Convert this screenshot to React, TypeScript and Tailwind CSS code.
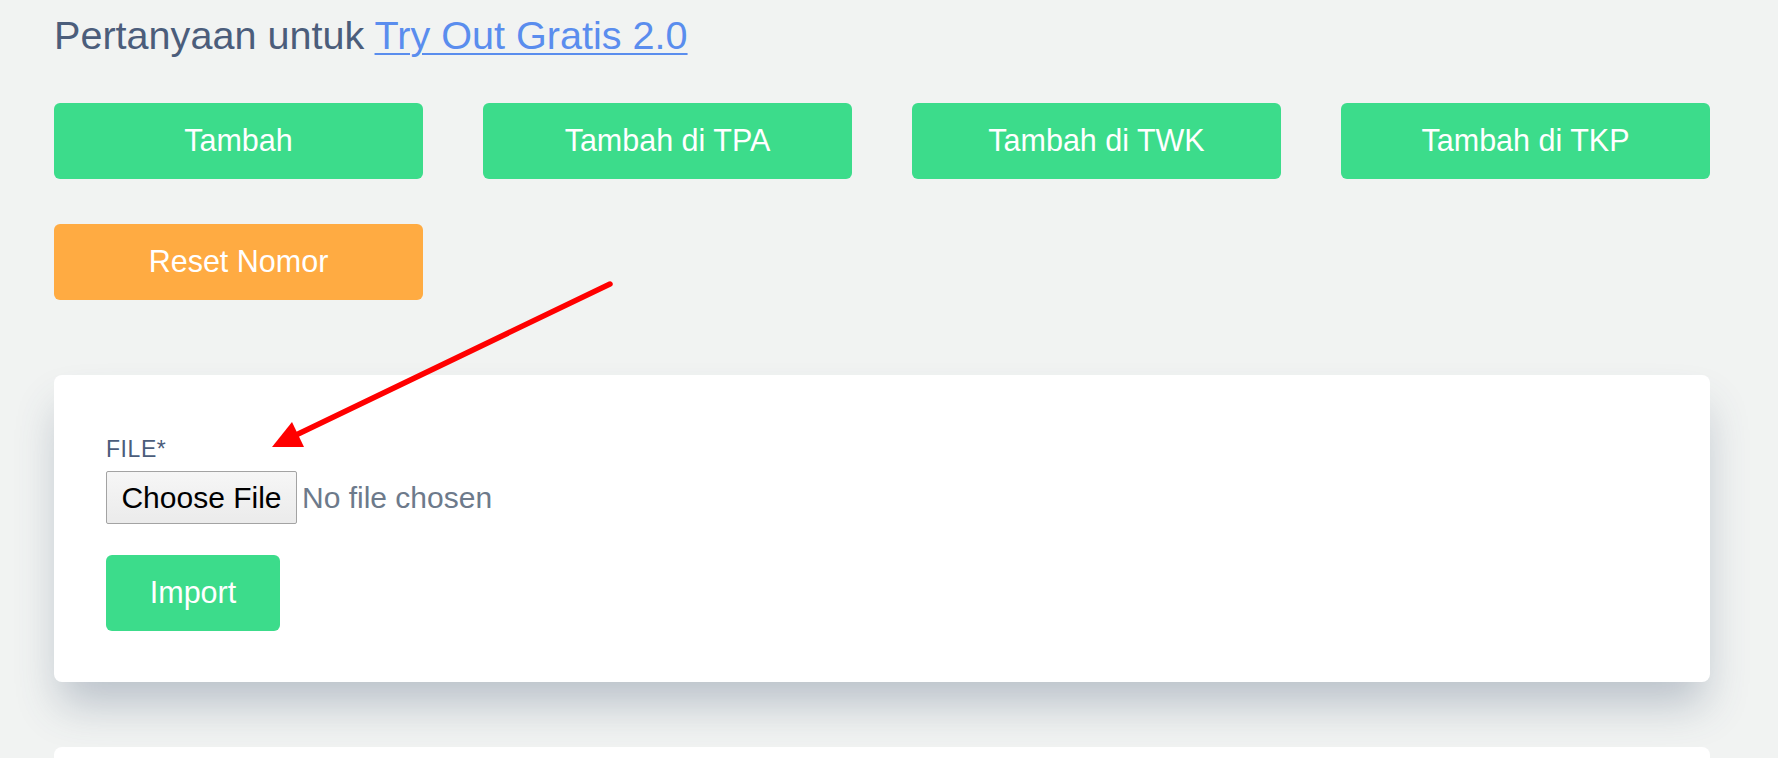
const actions = [
  { label: "Tambah", color: "bg-[#3cdc8b]" },
  { label: "Tambah di TPA", color: "bg-[#3cdc8b]" },
  { label: "Tambah di TWK", color: "bg-[#3cdc8b]" },
  { label: "Tambah di TKP", color: "bg-[#3cdc8b]" },
  { label: "Reset Nomor", color: "bg-[#ffab42]" },
];

function Arrow() {
  return (
    <svg
      className="absolute left-0 top-0 pointer-events-none"
      width="700"
      height="480"
      viewBox="0 0 700 480"
    >
      <line x1="610" y1="284" x2="296" y2="435" stroke="#ff0000" strokeWidth="5.5" strokeLinecap="round" />
      <polygon points="272,447 292,422 304,447" fill="#ff0000" />
    </svg>
  );
}

export default function App() {
  return (
    <div
      className="relative min-h-screen overflow-hidden bg-[#f1f3f2] pl-[54px]"
      style={{ fontFamily: '"Liberation Sans", Arial, sans-serif' }}
    >
      <div className="w-[1656px]">
        <h1 className="mt-[13px] text-[39.6px] leading-[44px] text-[#4b5d7b]">
          Pertanyaan untuk{" "}
          <a href="#" className="text-[#5a8dee] underline underline-offset-[4px] decoration-[2px]">
            Try Out Gratis 2.0
          </a>
        </h1>

        <div className="mt-[46px] grid grid-cols-4 gap-x-[60px] gap-y-[45px]">
          {actions.map(({ label, color }) => (
            <button
              key={label}
              className={`${color} h-[76px] rounded-[6px] text-[30.5px] text-white flex items-center justify-center`}
            >
              {label}
            </button>
          ))}
        </div>

        {/* import card */}
        <div className="mt-[75px] rounded-[8px] bg-white px-[52px] pt-[60px] pb-[51px] shadow-[0_28px_44px_-6px_rgba(60,80,110,0.3)]">
          <label className="block text-[23px] leading-[28px] tracking-wide uppercase text-[#4b5d7b]">
            File*
          </label>
          <div className="mt-[8px] flex items-center">
            <span className="h-[53px] w-[191px] flex items-center justify-center rounded-[2px] border border-[#a3a3a3] bg-gradient-to-b from-[#f6f6f6] to-[#ebebeb] text-[30px] text-black">
              Choose File
            </span>
            <span className="ml-[5px] text-[30px] text-[#6d7a8b]">No file chosen</span>
          </div>
          <button className="mt-[31px] h-[76px] w-[174px] rounded-[6px] bg-[#3cdc8b] text-[30.5px] text-white">
            Import
          </button>
        </div>

        <div className="mt-[65px] h-[120px] rounded-[8px] bg-white" />
      </div>

      <Arrow />
    </div>
  );
}
